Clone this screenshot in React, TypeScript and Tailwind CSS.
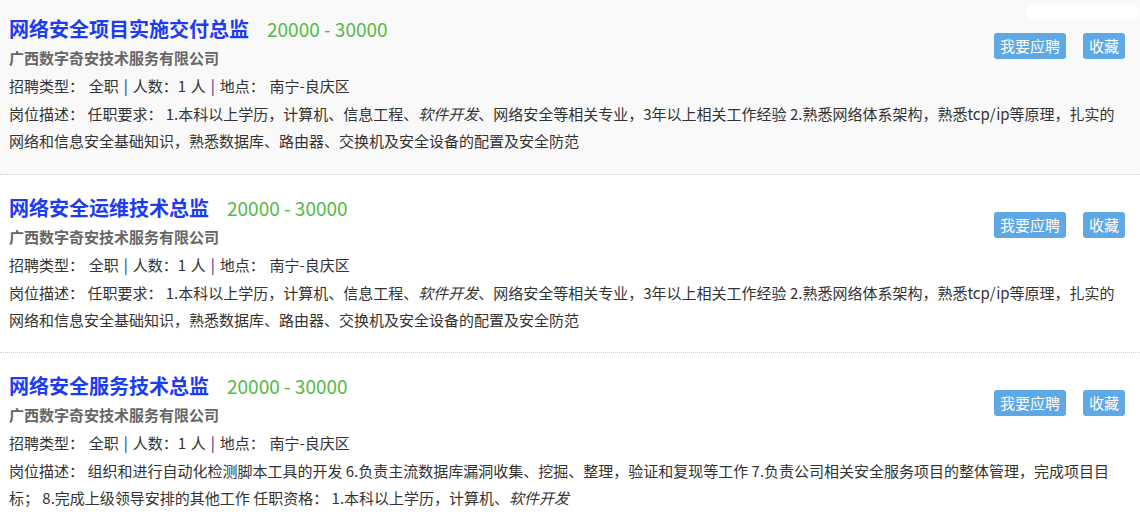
import React from "react";

type Job = {
  title: string;
  salary: string;
  company: string;
  type: string;
  count: string;
  location: string;
  desc: React.ReactNode;
};

const jobs: Job[] = [
  {
    title: "网络安全项目实施交付总监",
    salary: "20000 - 30000",
    company: "广西数字奇安技术服务有限公司",
    type: "全职",
    count: "1 人",
    location: "南宁-良庆区",
    desc: (
      <>
        任职要求： 1.本科以上学历，计算机、信息工程、<em>软件开发</em>、网络安全等相关专业，3年以上相关工作经验 2.熟悉网络体系架构，熟悉tcp/ip等原理，扎实的网络和信息安全基础知识，熟悉数据库、路由器、交换机及安全设备的配置及安全防范
      </>
    ),
  },
  {
    title: "网络安全运维技术总监",
    salary: "20000 - 30000",
    company: "广西数字奇安技术服务有限公司",
    type: "全职",
    count: "1 人",
    location: "南宁-良庆区",
    desc: (
      <>
        任职要求： 1.本科以上学历，计算机、信息工程、<em>软件开发</em>、网络安全等相关专业，3年以上相关工作经验 2.熟悉网络体系架构，熟悉tcp/ip等原理，扎实的网络和信息安全基础知识，熟悉数据库、路由器、交换机及安全设备的配置及安全防范
      </>
    ),
  },
  {
    title: "网络安全服务技术总监",
    salary: "20000 - 30000",
    company: "广西数字奇安技术服务有限公司",
    type: "全职",
    count: "1 人",
    location: "南宁-良庆区",
    desc: (
      <>
        组织和进行自动化检测脚本工具的开发 6.负责主流数据库漏洞收集、挖掘、整理，验证和复现等工作 7.负责公司相关安全服务项目的整体管理，完成项目目标； 8.完成上级领导安排的其他工作 任职资格： 1.本科以上学历，计算机、<em>软件开发</em>
      </>
    ),
  },
];

function JobCard({ job, first }: { job: Job; first: boolean }) {
  return (
    <div
      className={
        first
          ? "bg-[#f9f9f9] pl-[9px] pr-[15px] pt-[11px] pb-[20px] border-b border-dotted border-[#cfcfcf]"
          : "bg-white pl-[9px] pr-[15px] pt-[15px] pb-[19px] border-b border-dotted border-[#cfcfcf]"
      }
    >
      {/* header */}
      <div className="flex justify-between items-start">
        <div>
          <div className="flex items-center h-[36px] leading-[36px]">
            <span className="text-[20px] font-bold text-[#1c3cf2]">{job.title}</span>
            <span className="ml-[18px] text-[19px] text-[#55b946]">{job.salary}</span>
          </div>
          <div className="text-[15px] leading-[22px] font-bold text-[#666]">{job.company}</div>
        </div>
        <div className="flex gap-[17px] mt-[22px]">
          <button className="h-[26px] px-[6px] rounded-[3px] bg-[#5ea8e5] text-white text-[15px] leading-[26px]">
            我要应聘
          </button>
          <button className="h-[26px] px-[6px] rounded-[3px] bg-[#5ea8e5] text-white text-[15px] leading-[26px]">
            收藏
          </button>
        </div>
      </div>

      {/* meta row */}
      <div className="mt-[3px] text-[15px] leading-[28px] text-[#333] [word-spacing:1.5px]">
        招聘类型： 全职 <span className="text-[#2c2580]">|</span> 人数：{job.count}{" "}
        <span className="text-[#2c2580]">|</span> 地点： {job.location}
      </div>

      {/* description */}
      <div className="pr-[4px] text-[15px] leading-[27px] text-[#333]">
        岗位描述： {job.desc}
      </div>
    </div>
  );
}

export default function App() {
  return (
    <div
      className="relative w-[1140px] h-[528px] overflow-hidden bg-white"
      style={{ fontFamily: '"Noto Sans CJK SC", "Noto Sans", sans-serif' }}
    >
      {jobs.map((job, i) => (
        <JobCard key={i} job={job} first={i === 0} />
      ))}
      <div className="absolute top-[4px] right-0 w-[114px] h-[17px] rounded-full bg-white blur-[1px]" />
    </div>
  );
}
